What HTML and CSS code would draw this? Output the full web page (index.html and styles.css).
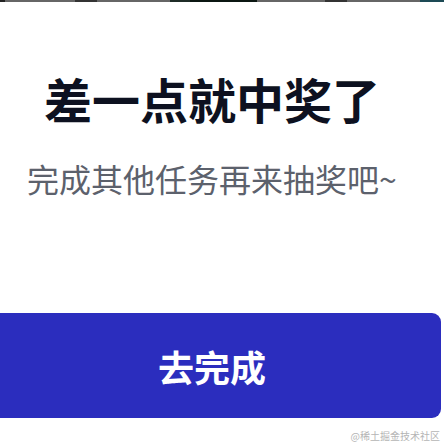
FILE: index.html
```html
<!DOCTYPE html>
<html lang="zh">
<head>
<meta charset="utf-8">
<link rel="stylesheet" href="styles.css">
</head>
<body>
<div class="topbar"></div>
<div class="card">
  <h1 class="title">差一点就中奖了</h1>
  <p class="subtitle">完成其他任务再来抽奖吧~</p>
  <button class="btn">去完成</button>
</div>
<div class="watermark">@稀土掘金技术社区</div>
</body>
</html>
```
FILE: styles.css
```css
html, body {
  margin: 0;
  padding: 0;
  background: #ffffff;
  width: 444px;
  height: 444px;
  overflow: hidden;
  font-family: "Noto Sans CJK SC", "Noto Sans", sans-serif;
}
.topbar {
  height: 2px;
  background: linear-gradient(to right,
    #222 0, #222 5px,
    #666 5px, #666 75px,
    #333 75px, #333 97px,
    #666 97px, #666 170px,
    #1f2c27 170px, #1f2c27 190px,
    #0b1712 190px, #0b1712 257px,
    #666 257px, #666 325px,
    #333 325px, #333 347px,
    #666 347px, #666 420px,
    #1d4a55 420px, #1d4a55 444px);
}
.card {
  width: 458px;
  margin-left: -17px;
  display: flex;
  flex-direction: column;
  align-items: center;
}
.title {
  margin: 68px 0 0;
  font-size: 48px;
  line-height: 56px;
  font-weight: 700;
  color: #0d1120;
  letter-spacing: 0;
}
.subtitle {
  margin: 32px 0 0;
  font-size: 32px;
  line-height: 40px;
  font-weight: 400;
  color: #5c616c;
}
.btn {
  margin-top: 115px;
  width: 100%;
  height: 105px;
  border: none;
  border-radius: 9px;
  background: #2b2dbe;
  color: #ffffff;
  font-family: "Noto Sans CJK SC", "Noto Sans", sans-serif;
  font-size: 36px;
  font-weight: 700;
  padding: 0;
}
.watermark {
  position: absolute;
  right: 4px;
  bottom: 2px;
  font-size: 10px;
  line-height: 12px;
  color: #b5b5b5;
  font-family: "Noto Sans CJK SC", serif;
}
```
